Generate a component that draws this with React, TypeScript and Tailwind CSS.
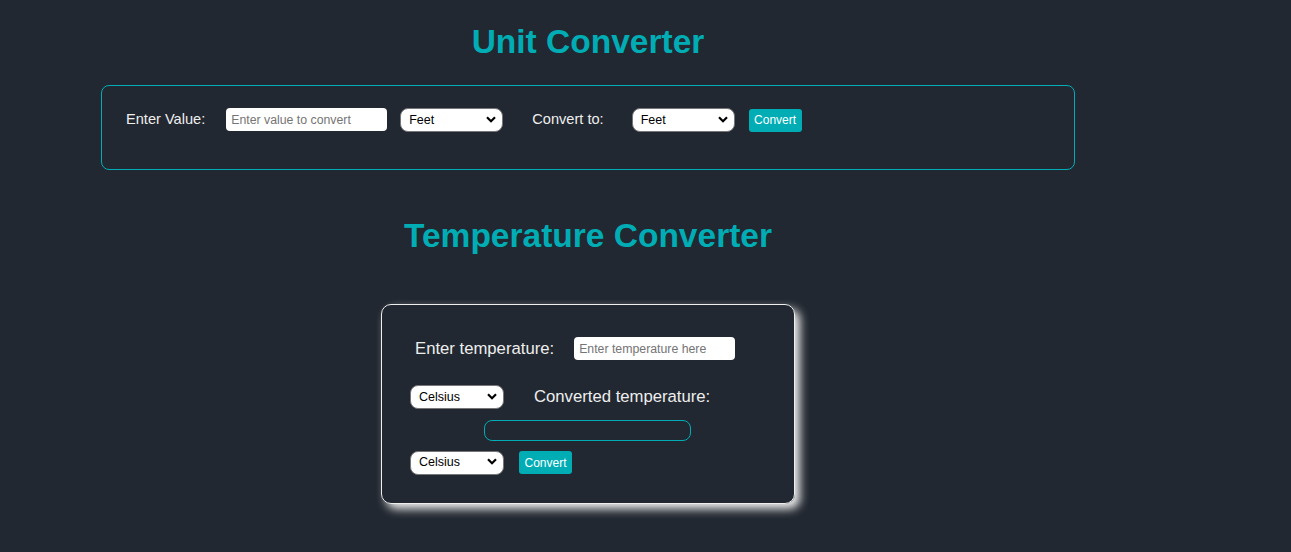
const font = { fontFamily: '"Liberation Sans", Arial, sans-serif' }

function Select({ value, width }: { value: string; width: string }) {
  return (
    <div className={`relative ${width}`}>
      <select
        defaultValue={value}
        className="h-[24px] w-full appearance-none rounded-[8px] border border-[#767676] bg-white pl-[8px] text-[12.5px] text-black outline-none"
      >
        <option>{value}</option>
      </select>
      <svg
        className="pointer-events-none absolute right-[7px] top-[9px]"
        width="10"
        height="7"
        viewBox="0 0 10 7"
        fill="none"
        stroke="black"
        strokeWidth="2.2"
      >
        <path d="M1 1.2l4 4 4-4" />
      </svg>
    </div>
  )
}

function ConvertButton() {
  return (
    <button className="h-[23px] w-[53px] rounded-[3px] bg-[#00adb5] text-[12px] text-white">
      Convert
    </button>
  )
}

export default function App() {
  return (
    <div className="min-h-screen w-full bg-[#222831] text-[#eeeeee]" style={font}>
      <div className="flex w-[1176px] flex-col items-center">
        <h1 className="mt-[23px] text-[33.5px] font-bold leading-[38px] text-[#00adb5]">
          Unit Converter
        </h1>

        {/* Unit converter */}
        <div className="mt-[24px] w-[974px] rounded-[8px] border border-[#00adb5] pb-[37px] pl-[24px] pt-[21px]">
          <div className="flex h-[25px] items-center">
            <label className="text-[14.6px]">Enter Value:</label>
            <input
              placeholder="Enter value to convert"
              className="ml-[21px] h-[23px] w-[161px] rounded-[4px] bg-white px-[5px] text-[12.3px] text-black outline-none placeholder:text-[#757575]"
            />
            <div className="ml-[13px]">
              <Select value="Feet" width="w-[103px]" />
            </div>
            <label className="ml-[29px] text-[14.6px]">Convert to:</label>
            <div className="ml-[28px]">
              <Select value="Feet" width="w-[103px]" />
            </div>
            <div className="ml-[14px]">
              <ConvertButton />
            </div>
          </div>
        </div>

        <h1 className="mt-[47px] text-[33.5px] font-bold leading-[38px] text-[#00adb5]">
          Temperature Converter
        </h1>

        {/* Temperature converter */}
        <div className="mt-[49px] flex w-[414px] flex-col rounded-[10px] border border-[#eeeeee] pb-[29px] pt-[32px] shadow-[5px_5px_10px_#eeeeee]">
          <div className="flex h-[23px] items-center pl-[33px]">
            <label className="text-[16.7px]">Enter temperature:</label>
            <input
              placeholder="Enter temperature here"
              className="ml-[20px] h-[23px] w-[161px] rounded-[4px] bg-white px-[5px] text-[12.3px] text-black outline-none placeholder:text-[#757575]"
            />
          </div>
          <div className="mt-[25px] flex h-[23px] items-center pl-[28px]">
            <Select value="Celsius" width="w-[94px]" />
            <label className="ml-[30px] text-[16.7px]">Converted temperature:</label>
          </div>
          <div className="mt-[12px] pl-[102px]">
            <output className="block h-[21px] w-[207px] rounded-[8px] border border-[#00adb5]" />
          </div>
          <div className="mt-[9px] flex h-[24px] items-center pl-[28px]">
            <Select value="Celsius" width="w-[94px]" />
            <div className="ml-[15px]">
              <ConvertButton />
            </div>
          </div>
        </div>
      </div>
    </div>
  )
}
